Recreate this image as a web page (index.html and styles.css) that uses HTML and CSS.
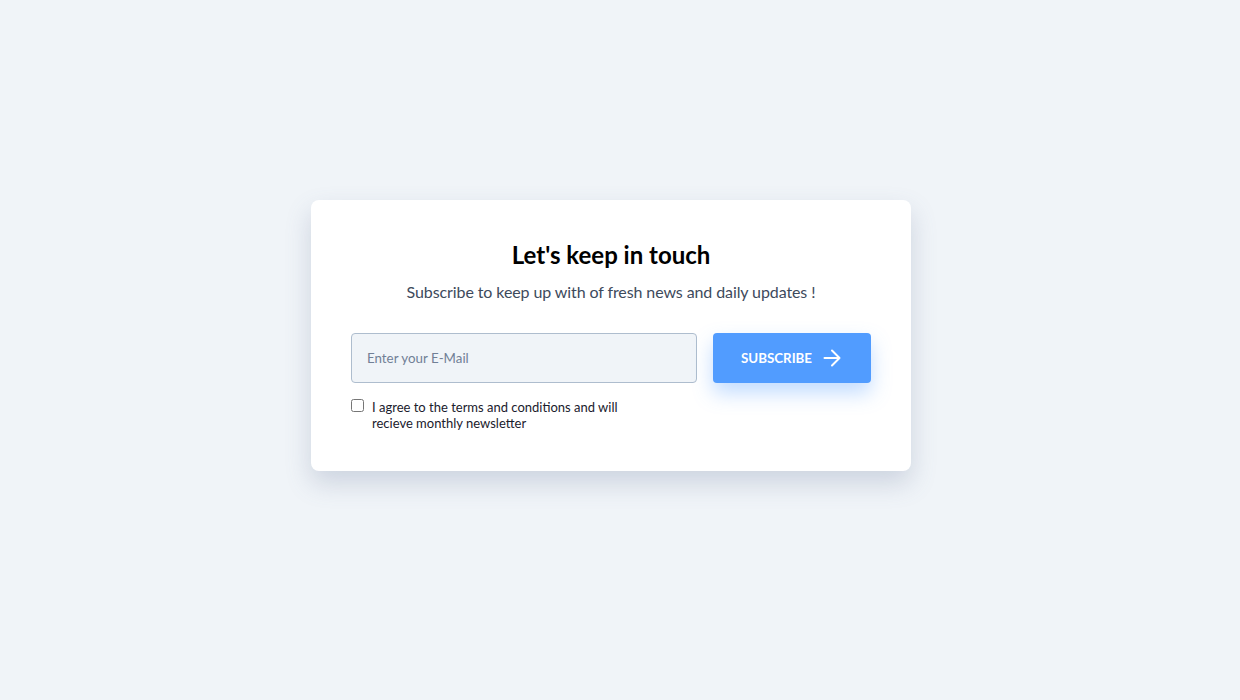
FILE: index.html
```html
<!DOCTYPE html>
<html lang="en">
<head>
<meta charset="utf-8">
<title>Newsletter</title>
<link rel="stylesheet" href="styles.css">
</head>
<body>
<main class="page">
  <section class="card">
    <h2 class="title">Let's keep in touch</h2>
    <p class="subtitle">Subscribe to keep up with of fresh news and daily updates !</p>
    <form class="form" onsubmit="return false">
      <input class="email" type="email" placeholder="Enter your E-Mail">
      <button class="btn" type="submit">
        <span>SUBSCRIBE</span>
        <svg class="arrow" width="18" height="18" viewBox="0 0 18 18" fill="none" stroke="currentColor" stroke-width="2" stroke-linecap="round" stroke-linejoin="round"><path d="M1.5 9h15M9 1.5 16.5 9 9 16.5"/></svg>
      </button>
    </form>
    <label class="agree">
      <input class="check" type="checkbox">
      <span>I agree to the terms and conditions and will recieve monthly newsletter</span>
    </label>
  </section>
</main>
</body>
</html>
```
FILE: styles.css
```css
html, body {
  margin: 0;
  padding: 0;
  height: 100%;
}
body {
  background: #f0f4f8;
  font-family: Lato, "Noto Sans", sans-serif;
  color: #1a202c;
}
.page {
  height: 100%;
  display: flex;
  align-items: center;
  justify-content: center;
  padding: 0 18px 30px 0;
  box-sizing: border-box;
}
.card {
  width: 600px;
  box-sizing: border-box;
  background: #fff;
  border-radius: 8px;
  padding: 40px;
  box-shadow: 0 12px 26px rgba(90, 110, 145, 0.24);
}
.title {
  margin: 0;
  text-align: center;
  font-size: 24px;
  line-height: 29px;
  font-weight: 700;
  color: #000;
}
.subtitle {
  margin: 13px 0 0;
  text-align: center;
  font-size: 16px;
  line-height: 19px;
  color: #3d4a5c;
  letter-spacing: -0.1px;
}
.form {
  margin-top: 32px;
  display: flex;
  gap: 16px;
}
.email {
  flex: 1;
  height: 50px;
  box-sizing: border-box;
  border: 1px solid #aebdce;
  border-radius: 4px;
  background: #f0f4f8;
  padding: 0 15px;
  font-family: inherit;
  font-size: 13.333px;
  color: #1a202c;
  outline: none;
}
.email::placeholder {
  color: #718096;
}
.btn {
  width: 158px;
  height: 50px;
  border: 0;
  border-radius: 4px;
  background: #519cff;
  color: #fff;
  font-family: inherit;
  font-size: 13.333px;
  font-weight: 700;
  display: flex;
  align-items: center;
  justify-content: center;
  gap: 11px;
  padding: 0 2px 0 0;
  box-shadow: 0 10px 20px rgba(81, 156, 255, 0.35);
  cursor: pointer;
}
.arrow {
  display: block;
}
.agree {
  margin-top: 16px;
  display: flex;
  align-items: flex-start;
  gap: 8px;
  font-size: 13px;
  line-height: 16px;
  color: #1a202c;
  width: 290px;
}
.check {
  margin: 0;
  width: 13px;
  height: 13px;
  flex: none;
}
```
